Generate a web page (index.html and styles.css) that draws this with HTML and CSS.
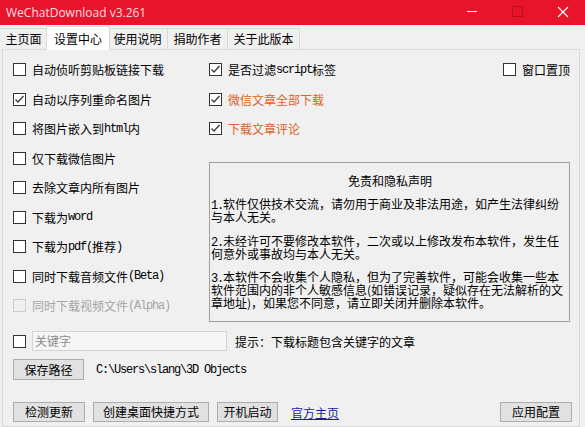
FILE: index.html
```html
<!DOCTYPE html>
<html lang="zh-CN">
<head>
<meta charset="utf-8">
<title>WeChatDownload v3.261</title>
<link rel="stylesheet" href="styles.css">
</head>
<body>
<div class="titlebar">
  <span class="title">WeChatDownload v3.261</span>
  <svg class="controls" width="130" height="25" viewBox="0 0 130 25">
    <line x1="12" y1="11.5" x2="22" y2="11.5" stroke="#ffffff" stroke-width="1"/>
    <rect x="57.5" y="6.5" width="10" height="10" fill="none" stroke="#b8101f" stroke-width="1"/>
    <path d="M103 7 L113 17 M113 7 L103 17" stroke="#ffffff" stroke-width="1.1" fill="none"/>
  </svg>
</div>
<div class="tabs">
  <div class="tab w3">主页面</div>
  <div class="tab active">设置中心</div>
  <div class="tab">使用说明</div>
  <div class="tab">捐助作者</div>
  <div class="tab w5">关于此版本</div>
</div>
<div class="panel">
  <div class="top">
    <div class="col-left">
      <label class="row"><span class="cb"></span>自动侦听剪贴板链接下载</label>
      <label class="row"><span class="cb checked"><svg width="11" height="11" viewBox="0 0 11 11"><path d="M1.5 5.5 L4 8 L9.5 2" fill="none" stroke="#3a3a3a" stroke-width="1.3"/></svg></span>自动以序列重命名图片</label>
      <label class="row"><span class="cb"></span>将图片嵌入到<span class="m">html</span>内</label>
      <label class="row"><span class="cb"></span>仅下载微信图片</label>
      <label class="row"><span class="cb"></span>去除文章内所有图片</label>
      <label class="row"><span class="cb"></span>下载为<span class="m">word</span></label>
      <label class="row"><span class="cb"></span>下载为<span class="m">pdf(</span>推荐<span class="m">)</span></label>
      <label class="row"><span class="cb"></span>同时下载音频文件<span class="m">(Beta)</span></label>
      <label class="row disabled"><span class="cb"></span>同时下载视频文件<span class="m">(Alpha)</span></label>
    </div>
    <div class="col-right">
      <div class="row split">
        <label class="item"><span class="cb checked"><svg width="11" height="11" viewBox="0 0 11 11"><path d="M1.5 5.5 L4 8 L9.5 2" fill="none" stroke="#3a3a3a" stroke-width="1.3"/></svg></span>是否过滤<span class="m">script</span>标签</label>
        <label class="item"><span class="cb"></span>窗口置顶</label>
      </div>
      <label class="row orange"><span class="cb checked"><svg width="11" height="11" viewBox="0 0 11 11"><path d="M1.5 5.5 L4 8 L9.5 2" fill="none" stroke="#3a3a3a" stroke-width="1.3"/></svg></span>微信文章全部下载</label>
      <label class="row orange"><span class="cb checked"><svg width="11" height="11" viewBox="0 0 11 11"><path d="M1.5 5.5 L4 8 L9.5 2" fill="none" stroke="#3a3a3a" stroke-width="1.3"/></svg></span>下载文章评论</label>
      <div class="disclaimer">
        <div class="d-title">免责和隐私声明</div>
        <p><span class="m">1.</span>软件仅供技术交流，请勿用于商业及非法用途，如产生法律纠纷<br>与本人无关。</p>
        <p><span class="m">2.</span>未经许可不要修改本软件，二次或以上修改发布本软件，发生任<br>何意外或事故均与本人无关。</p>
        <p><span class="m">3.</span>本软件不会收集个人隐私，但为了完善软件，可能会收集一些本<br>软件范围内的非个人敏感信息(如错误记录，疑似存在无法解析的文<br>章地址)，如果您不同意，请立即关闭并删除本软件。</p>
      </div>
    </div>
  </div>
  <div class="keyword-row">
    <span class="cb"></span>
    <div class="kw-input">关键字</div>
    <span class="hint">提示：下载标题包含关键字的文章</span>
  </div>
  <div class="path-row">
    <button class="btn b-path">保存路径</button>
    <span class="path">C:\Users\slang\3D Objects</span>
  </div>
  <div class="bottom-row">
    <button class="btn b-update">检测更新</button>
    <button class="btn b-shortcut">创建桌面快捷方式</button>
    <button class="btn b-boot">开机启动</button>
    <a class="link" href="#">官方主页</a>
    <button class="btn b-apply">应用配置</button>
  </div>
</div>
</body>
</html>
```

FILE: styles.css
```css
* { box-sizing: border-box; }
html, body { margin: 0; padding: 0; }
body {
  width: 585px;
  height: 427px;
  overflow: hidden;
  background: #f0f0f0;
  font-family: "Noto Sans CJK SC", sans-serif;
  font-size: 12px;
  color: #000;
}

.titlebar {
  height: 25px;
  background: #e8142b;
  display: flex;
  align-items: center;
}
.title {
  font-family: "Open Sans", "Liberation Sans", sans-serif;
  font-size: 12px;
  color: #fbdfe2;
  margin-left: 6px;
  margin-top: -1px;
}
.controls { margin-left: auto; display: block; }

.tabs {
  height: 24px;
  display: flex;
  align-items: flex-end;
}
.tab {
  width: 60px;
  height: 21px;
  border: 1px solid #d9d9d9;
  border-bottom: none;
  border-left: none;
  background: #f0f0f0;
  line-height: 19px;
  text-align: center;
}
.tab.w3 { width: 48px; }
.tab.w5 { width: 72px; border-right: 1px solid #d9d9d9; }
.tab.active {
  width: 64px;
  height: 24px;
  margin: 0 -2px -1px -2px;
  background: #ffffff;
  border: 1px solid #d9d9d9;
  border-bottom: none;
  line-height: 20px;
  padding-top: 1.5px;
  position: relative;
  z-index: 1;
}

.panel {
  height: 378px;
  margin: 0 5px 0 2px;
  border: 1px solid #d9d9d9;
  padding: 5px 9px 0 10px;
}

.top {
  height: 267px;
  display: grid;
  grid-template-columns: 196px 1fr;
}
.col-left {
  display: grid;
  grid-auto-rows: 29.5px;
}
.col-right {
  display: grid;
  grid-template-rows: 29.5px 29.5px 29.5px auto;
}
.row {
  display: flex;
  align-items: center;
  white-space: nowrap;
}
.split { justify-content: space-between; }
.item { display: flex; align-items: center; }

.cb {
  width: 13px;
  height: 13px;
  border: 1px solid #333;
  background: #fff;
  flex: none;
  margin-right: 6px;
  display: flex;
}
.cb svg { display: block; }

.m {
  font-family: "Liberation Mono", monospace;
  font-size: 12px;
  letter-spacing: -1.2px;
  line-height: 0;
}

.orange { color: #dc6228; }
.disabled { color: #a6a6a6; }
.disabled .cb { border-color: #cdcdcd; background: #f0f0f0; }

.disclaimer {
  margin-top: 18.5px;
  height: 160px;
  border: 1px solid #a0a0a0;
  padding: 10px 0 0 1px;
  overflow: hidden;
}
.d-title {
  text-align: center;
  line-height: 16px;
  margin-bottom: 8px;
}
.disclaimer p {
  margin: 0 0 10.5px 0;
  line-height: 13px;
  white-space: nowrap;
}

.keyword-row {
  margin-top: 9px;
  height: 20px;
  display: flex;
  align-items: center;
}
.kw-input {
  width: 195px;
  height: 20px;
  border: 1px solid #d4d4d4;
  background: #f6f6f6;
  color: #8c8c8c;
  line-height: 18px;
  padding-left: 2px;
}
.hint { margin-left: 8px; }

.path-row {
  margin-top: 8px;
  height: 21px;
  display: flex;
  align-items: center;
}
.path {
  margin-left: 12px;
  font-family: "Liberation Mono", monospace;
  font-size: 12px;
  letter-spacing: -1.2px;
}

.btn {
  font-family: "Noto Sans CJK SC", sans-serif;
  font-size: 12px;
  color: #000;
  background: #e1e1e1;
  border: 1px solid #adadad;
  padding: 0;
  margin: 0;
  height: 20px;
  line-height: 18px;
}
.b-path { width: 71px; height: 21px; }

.bottom-row {
  margin-top: 22px;
  height: 20px;
  display: flex;
  align-items: center;
}
.b-update { width: 72px; }
.b-shortcut { width: 116px; margin-left: 8px; }
.b-boot { width: 61px; margin-left: 8px; }
.link {
  margin-left: 13px;
  color: #1a1aa8;
  text-decoration: underline;
}
.b-apply { width: 72px; margin-left: auto; margin-right: -2px; }
```
